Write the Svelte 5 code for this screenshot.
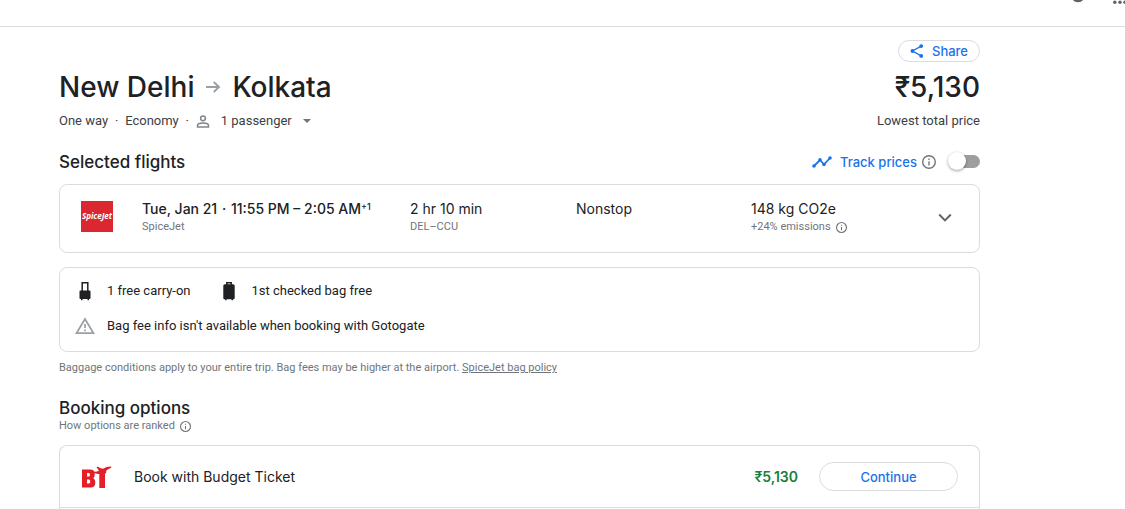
<script>
  let tracking = $state(false);
</script>

{#snippet info(size)}
  <svg class="info" width={size} height={size} viewBox="2 2 20 20" aria-hidden="true">
    <circle cx="12" cy="12" r="9" fill="none" stroke="currentColor" stroke-width="2" />
    <path d="M11 11h2v6h-2zM11 7h2v2h-2z" fill="currentColor" />
  </svg>
{/snippet}

<header class="topbar">
  <button aria-label="Settings">
    <svg width="16" height="6" viewBox="0 0 16 6"><path d="M3 0h10c-1 1.500-3 2.200-5 2.200S4 1.500 3 0z" fill="#5f6368" /></svg>
  </button>
  <button aria-label="Apps">
    <svg width="12" height="6" viewBox="0 0 12 6" fill="#5f6368"><circle cx="1.800" cy="2.200" r="1.700" /><circle cx="7" cy="2.200" r="1.700" /><circle cx="12" cy="2.200" r="1.700" /></svg>
  </button>
</header>

<main>
  <div class="share-row">
    <button class="pill share">
      <svg width="14" height="14" viewBox="2 2 20 20" fill="none" stroke="currentColor" stroke-width="1.900" aria-hidden="true">
        <path d="M18 5 5.500 12 18 19" />
        <circle cx="18" cy="5" r="1.800" fill="currentColor" /><circle cx="5.500" cy="12" r="1.800" fill="currentColor" /><circle cx="18" cy="19" r="1.800" fill="currentColor" />
      </svg>
      Share
    </button>
  </div>

  <div class="split title">
    <h1>
      New Delhi
      <svg width="16" height="14" viewBox="0 0 16 14" fill="none" stroke="#9aa0a6" stroke-width="1.900" role="img" aria-label="to"><path d="M1 7h13M8.800 2 14 7l-5.200 5" /></svg>
      Kolkata
    </h1>
    <strong class="total">₹5,130</strong>
  </div>

  <div class="split details">
    <div class="trip">
      <span>One way</span><span class="dot">·</span><span>Economy</span><span class="dot">·</span>
      <button class="passengers">
        <svg width="14" height="13" viewBox="0 0 14 13" fill="none" stroke="#80868b" stroke-width="1.500" aria-hidden="true">
          <circle cx="7" cy="3.300" r="2.400" /><path d="M1.500 12v-1.600C1.500 8.900 4.500 8 7 8s5.500.9 5.500 2.400V12z" />
        </svg>
        <span>1 passenger</span>
        <svg width="8" height="4" viewBox="0 0 8 4" aria-hidden="true"><path d="M0 0h8L4 4z" fill="#70757a" /></svg>
      </button>
    </div>
    <span>Lowest total price</span>
  </div>

  <div class="split section">
    <h2>Selected flights</h2>
    <div class="track">
      <svg width="20" height="12" viewBox="0 0 20 12" fill="#1a73e8" aria-hidden="true">
        <path d="m2 10 6-6 4 4.500L18 2" fill="none" stroke="#1a73e8" stroke-width="1.800" />
        <circle cx="2" cy="10" r="1.800" /><circle cx="8" cy="3.800" r="1.700" /><circle cx="12" cy="8.500" r="1.700" /><circle cx="18" cy="2" r="1.800" />
      </svg>
      <label for="track">Track prices</label>
      {@render info(14)}
      <input id="track" type="checkbox" role="switch" bind:checked={tracking} />
    </div>
  </div>

  <section class="card flight">
    <svg class="airline" width="32" height="31" viewBox="0 0 32 31" role="img" aria-label="SpiceJet logo">
      <rect width="32" height="31" fill="#db2730" />
      <text x="16" y="18" text-anchor="middle" class="brand">SpiceJet</text>
    </svg>
    <div class="when">
      <p class="main strong">Tue, Jan 21 <span class="mid">·</span> 11:55 PM – 2:05 AM<sup>+1</sup></p>
      <p class="sub">SpiceJet</p>
    </div>
    <div class="duration"><p class="main">2 hr 10 min</p><p class="sub">DEL–CCU</p></div>
    <div class="stops"><p class="main">Nonstop</p></div>
    <div class="carbon"><p class="main">148 kg CO2e</p><p class="sub">+24% emissions {@render info(11)}</p></div>
    <button class="expand" aria-label="Flight details">
      <svg width="14" height="9" viewBox="0 0 14 9" fill="none" stroke="#5f6368" stroke-width="1.900"><path d="m1.200 1.500 5.800 5.800 5.800-5.800" /></svg>
    </button>
  </section>

  <section class="card bags">
    <div class="bagline">
      <span class="bag">
        <svg width="20" height="20" viewBox="0 0 20 20" aria-hidden="true">
          <path d="M7.200 11V1.800h5.600V11" fill="none" stroke="#202124" stroke-width="1.500" />
          <path d="M5.400 9.500h9.200q.9 0 .9.900v6.700q0 .9-.9.900h-.6v1.300h-1.500V18h-5v1.300H6V18h-.6q-.9 0-.9-.9v-6.700q0-.9.900-.9z" fill="#202124" />
        </svg>
        1 free carry-on
      </span>
      <span class="bag">
        <svg width="20" height="20" viewBox="0 0 20 20" aria-hidden="true">
          <path d="M7.800 4V1.700h4.400V4" fill="none" stroke="#202124" stroke-width="1.500" />
          <path d="M5.900 3.200h8.200q1.600 0 1.600 1.600V17q0 1.200-1.200 1.200H14v1h-1.500v-1h-5v1H6v-1h-.5q-1.200 0-1.200-1.200V4.800q0-1.600 1.600-1.600z" fill="#202124" />
        </svg>
        1st checked bag free
      </span>
    </div>
    <div class="bag">
      <svg width="20" height="18" viewBox="0 0 20 18" fill="none" stroke="#9aa0a6" stroke-width="1.700" aria-hidden="true">
        <path d="M10 2 1.500 16.200h17z" /><path d="M10 7v4M10 12.400v1.800" />
      </svg>
      Bag fee info isn't available when booking with Gotogate
    </div>
  </section>

  <p class="note">Baggage conditions apply to your entire trip. Bag fees may be higher at the airport. <a href="#policy">SpiceJet bag policy</a></p>

  <h2 class="booking">Booking options</h2>
  <p class="ranked">How options are ranked {@render info(11)}</p>

  <section class="options">
    <div class="option">
      <svg class="agency" width="31" height="24" viewBox="0 0 31 24" fill="#e51f27" role="img" aria-label="Budget Ticket logo">
        <path fill-rule="evenodd" d="M1 4.500h8.500q4.300 0 4.300 4.500 0 3-1.600 4 2.100 1 2.100 4.500 0 5-4.600 5H1zm5 3.500v3.500h1.800q1.200 0 1.200-1.700T7.800 8zm0 6.500v4h2q1.300 0 1.300-2T8 14.500z" />
        <path d="M10.500 6q4 1.400 7.500-.3L15.400 2q2-.6 3.600.9l3 .8q4-2.400 7.500-2.300 1.600.2.500 1.400L25.500 5.300 25 8.500l-1-.2V23h-5.700V9q-4.800.6-7.800-3z" />
      </svg>
      <span class="agent">Book with Budget Ticket</span>
      <span class="price">₹5,130</span>
      <button class="pill continue">Continue</button>
    </div>
  </section>
</main>

<style>
  :global(body) { background: #fff; color: #202124; font: 13px/20px Roboto, sans-serif; }
  h1, h2, p { margin: 0; font-weight: 500; }
  p { font-weight: 400; }
  button { padding: 0; border: 0; background: none; color: inherit; font: inherit; cursor: pointer; }
  svg { flex: none; }
  .topbar { display: flex; justify-content: flex-end; align-items: flex-start; gap: 27px; height: 26px; border-bottom: 1px solid #dadce0; }
  .topbar button, .topbar svg { display: block; }
  main { margin: 13px 145px 0 59px; }
  h1, h2, .total, .pill, .track label, .main, .agent, .price { font-family: "Google Sans", Inter, sans-serif; }
  .split { display: flex; justify-content: space-between; align-items: center; }
  .share-row { display: flex; justify-content: flex-end; }
  .pill { display: flex; align-items: center; justify-content: center; border: 1px solid #dadce0; border-radius: 16px; color: #1a73e8; font-size: 13px; font-weight: 500; }
  .share { gap: 8px; width: 82px; height: 22px; }
  .title { height: 36px; margin-top: 7px; }
  h1 { display: flex; align-items: center; gap: 11px; font-size: 28px; line-height: 36px; }
  .total { font-size: 28px; line-height: 36px; font-weight: 500; }
  .details { margin-top: 6px; color: #3c4043; }
  .trip, .passengers { display: flex; align-items: center; }
  .dot { width: 17px; text-align: center; }
  .passengers { gap: 11px; }
  .section { height: 24px; margin-top: 19px; }
  h2 { font-size: 17px; line-height: 24px; }
  .track { display: flex; align-items: center; color: #70757a; }
  .track label { margin: 0 5px 0 8px; color: #1a73e8; font-weight: 500; }
  .track input { appearance: none; display: flex; align-items: center; width: 29px; height: 13px; margin: 0 0 2px 15px; border-radius: 8px; background: #9e9e9e; cursor: pointer; }
  .track input::before { content: ""; width: 18px; height: 18px; flex: none; margin-left: -3px; border-radius: 50%; background: #fff; box-shadow: 0 1px 3px rgba(0, 0, 0, .4); }
  .track input:checked { background: #8ab4f8; }
  .track input:checked::before { margin-left: 14px; background: #1a73e8; }
  .card { border: 1px solid #dadce0; border-radius: 8px; }
  .flight { display: grid; grid-template-columns: 61fr 268fr 166fr 175fr 181fr 26fr; align-items: start; margin-top: 10px; padding: 14px 21px 17px; }
  .airline { margin-top: 2px; }
  .brand { fill: #fff; font: italic 700 8px "Open Sans", sans-serif; }
  .main { font-size: 14px; line-height: 20px; white-space: nowrap; }
  .strong { font-weight: 500; }
  .mid { margin: 0 1px; }
  sup { font-size: 9px; line-height: 0; vertical-align: 4px; }
  .sub, .note, .ranked { color: #70757a; font-size: 11px; line-height: 16px; }
  .sub, .ranked { display: flex; align-items: center; gap: 5px; }
  .expand { align-self: center; justify-self: center; display: flex; padding: 4px; }
  .bags { display: grid; gap: 15px; margin-top: 14px; padding: 13px 15px 15px; }
  .bagline { display: flex; gap: 29px; }
  .bag { display: flex; align-items: center; gap: 12px; }
  .note { margin-top: 8px; }
  .note a { color: inherit; }
  .booking { margin-top: 20px; }
  .ranked { margin-top: -2px; }
  .options { margin-top: 11px; padding-bottom: 1px; border: 1px solid #dadce0; border-bottom: 0; border-radius: 8px 8px 0 0; }
  .option { display: flex; align-items: center; height: 61px; padding: 0 21px; border-bottom: 1px solid #dadce0; }
  .agent { flex: 1; margin-left: 22px; font-size: 14px; }
  .price { margin-right: 21px; color: #188038; font-size: 14px; font-weight: 600; }
  .continue { width: 139px; height: 29px; }
</style>
